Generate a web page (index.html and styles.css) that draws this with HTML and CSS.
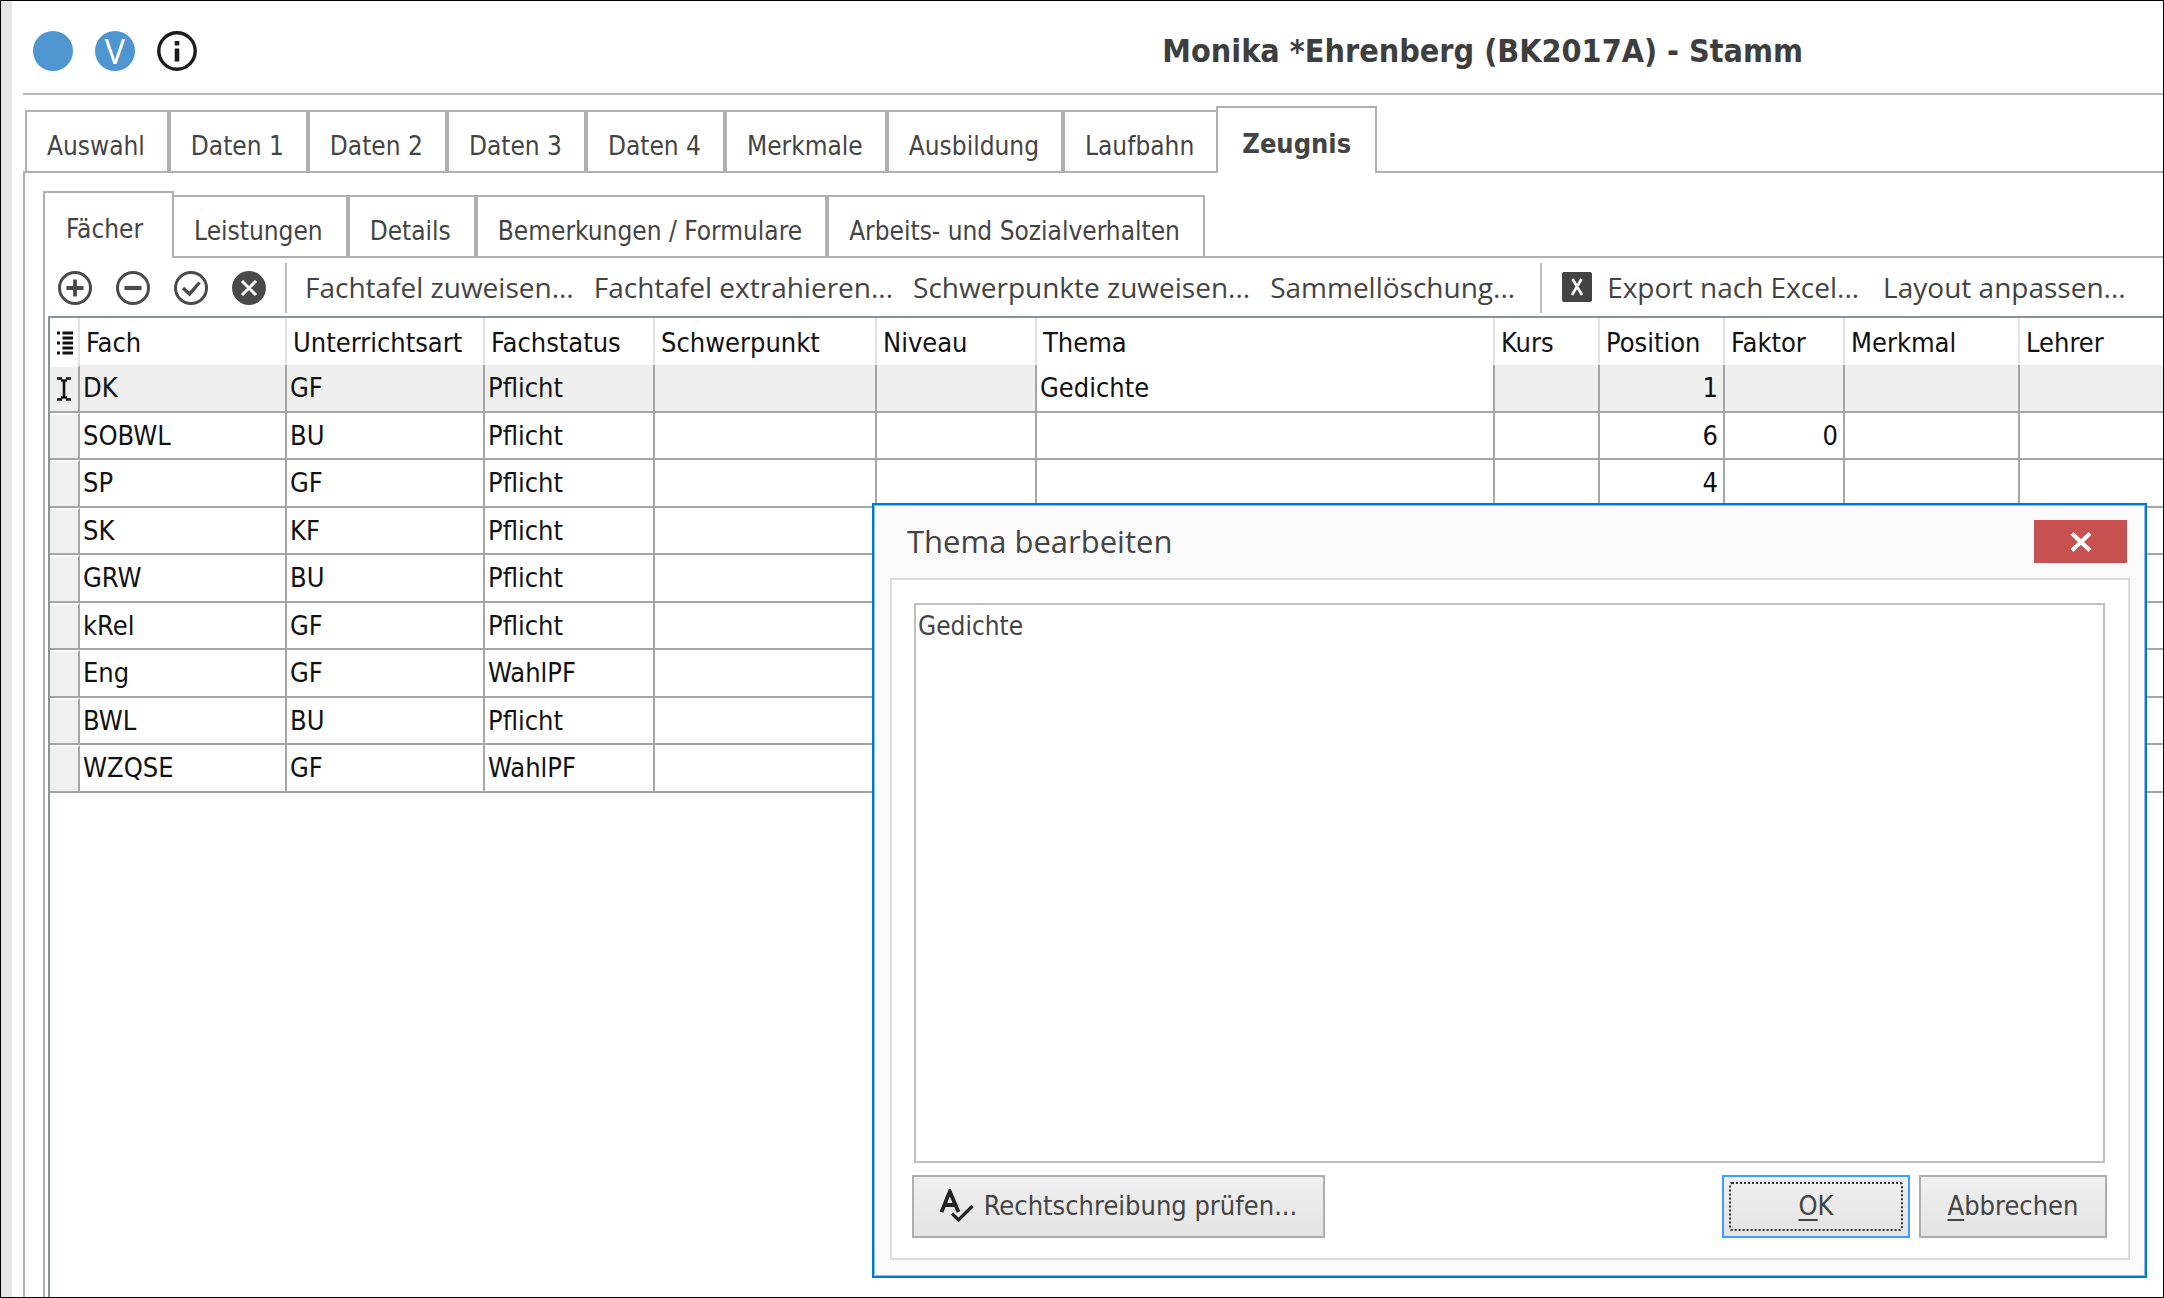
FILE: index.html
```html
<!DOCTYPE html>
<html lang="de">
<head>
<meta charset="utf-8">
<title>Monika *Ehrenberg (BK2017A) - Stamm</title>
<link rel="stylesheet" href="styles.css">
</head>
<body>
<main class="window">
  <header class="header">
    <button class="round-button" type="button" aria-label="Status">
      <svg width="40" height="40" viewBox="0 0 40 40"><circle cx="20" cy="20" r="20" fill="#4f96d0"/></svg>
    </button>
    <button class="round-button round-button--letter" type="button">V</button>
    <button class="round-button" type="button" aria-label="Info">
      <svg width="40" height="40" viewBox="0 0 40 40"><circle cx="20" cy="20" r="18.2" fill="#fff" stroke="#1c1c1c" stroke-width="3.4"/><path d="M20 10v4.500M20 17.500v13" stroke="#1c1c1c" stroke-width="4.6"/></svg>
    </button>
    <h1 class="title">Monika *Ehrenberg (BK2017A) - Stamm</h1>
  </header>

  <nav class="tabs tabs--main" role="tablist">
    <button class="tab" role="tab">Auswahl</button>
    <button class="tab" role="tab">Daten 1</button>
    <button class="tab" role="tab">Daten 2</button>
    <button class="tab" role="tab">Daten 3</button>
    <button class="tab" role="tab">Daten 4</button>
    <button class="tab" role="tab">Merkmale</button>
    <button class="tab" role="tab">Ausbildung</button>
    <button class="tab tab--before-active" role="tab">Laufbahn</button>
    <button class="tab tab--active tab--bold" role="tab" aria-selected="true">Zeugnis</button>
  </nav>

  <section class="panel">
    <nav class="tabs" role="tablist">
      <button class="tab tab--active" role="tab" aria-selected="true">Fächer</button>
      <button class="tab tab--after-active" role="tab">Leistungen</button>
      <button class="tab" role="tab">Details</button>
      <button class="tab" role="tab">Bemerkungen / Formulare</button>
      <button class="tab" role="tab">Arbeits- und Sozialverhalten</button>
    </nav>

    <section class="subpanel">
      <div class="toolbar" role="toolbar">
        <div class="toolbar-icons">
          <button class="icon-button" type="button" aria-label="Hinzufügen">
            <svg width="34" height="34" viewBox="0 0 34 34" fill="none" stroke="#4a4a4a"><circle cx="17" cy="17" r="15.5" stroke-width="3"/><path d="M17 8.5v17M8.500 17h17" stroke-width="3.800"/></svg>
          </button>
          <button class="icon-button" type="button" aria-label="Entfernen">
            <svg width="34" height="34" viewBox="0 0 34 34" fill="none" stroke="#4a4a4a"><circle cx="17" cy="17" r="15.5" stroke-width="3"/><path d="M8.500 17h17" stroke-width="4.200"/></svg>
          </button>
          <button class="icon-button" type="button" aria-label="Speichern">
            <svg width="34" height="34" viewBox="0 0 34 34" fill="none" stroke="#4a4a4a"><circle cx="17" cy="17" r="15.500" stroke-width="3"/><path d="M9 17l6.500 6L25.500 11.500" stroke-width="3.400"/></svg>
          </button>
          <button class="icon-button" type="button" aria-label="Verwerfen">
            <svg width="34" height="34" viewBox="0 0 34 34" fill="none"><circle cx="17" cy="17" r="17" fill="#4a4a4a"/><path d="M10 10l14 14M24 10L10 24" stroke="#fff" stroke-width="3"/></svg>
          </button>
        </div>
        <div class="toolbar-group">
          <button class="text-button" type="button">Fachtafel zuweisen...</button>
          <button class="text-button" type="button">Fachtafel extrahieren...</button>
          <button class="text-button" type="button">Schwerpunkte zuweisen...</button>
          <button class="text-button" type="button">Sammellöschung...</button>
        </div>
        <div class="toolbar-group toolbar-group--view">
          <button class="text-button" type="button">
            <svg width="30" height="30" viewBox="0 0 30 30"><rect width="30" height="30" rx="2" fill="#444"/><path d="M10.500 7l9.500 16M19.500 7L10 23" stroke="#fff" stroke-width="2.6"/></svg>
            Export nach Excel...
          </button>
          <button class="text-button" type="button">Layout anpassen...</button>
        </div>
      </div>

      <div class="grid-box">
        <table class="grid">
          <colgroup>
            <col class="w-mark"><col class="w-fach"><col class="w-art"><col class="w-status"><col class="w-schwer"><col class="w-niveau"><col class="w-thema"><col class="w-kurs"><col class="w-pos"><col class="w-faktor"><col class="w-merkmal"><col>
          </colgroup>
          <thead>
            <tr>
              <th aria-label="Spalten"><svg class="mark" width="16" height="24" viewBox="0 0 16 24" stroke="#111" stroke-width="2.800"><path d="M0 2h3M5.500 2h10.500M5.500 7h10.500M0 12h3M5.500 12h10.500M5.500 17h10.500M0 22h3M5.500 22h10.500"/></svg></th>
              <th>Fach</th><th>Unterrichtsart</th><th>Fachstatus</th><th>Schwerpunkt</th><th>Niveau</th><th>Thema</th><th>Kurs</th><th>Position</th><th>Faktor</th><th>Merkmal</th><th>Lehrer</th>
            </tr>
          </thead>
          <tbody>
            <tr class="current"><td><svg class="mark" width="14" height="24" viewBox="0 0 14 24" fill="none" stroke="#111" stroke-width="2.600"><path d="M0 1.500h5M9 1.500h5M0 22.500h5M9 22.500h5M4 3.500h6M4 20.500h6M7 3.500v17"/></svg></td><td>DK</td><td>GF</td><td>Pflicht</td><td></td><td></td><td class="editing">Gedichte</td><td></td><td class="num">1</td><td></td><td></td><td></td></tr>
            <tr><td></td><td>SOBWL</td><td>BU</td><td>Pflicht</td><td></td><td></td><td></td><td></td><td class="num">6</td><td class="num">0</td><td></td><td></td></tr>
            <tr><td></td><td>SP</td><td>GF</td><td>Pflicht</td><td></td><td></td><td></td><td></td><td class="num">4</td><td></td><td></td><td></td></tr>
            <tr><td></td><td>SK</td><td>KF</td><td>Pflicht</td><td></td><td></td><td></td><td></td><td></td><td></td><td></td><td></td></tr>
            <tr><td></td><td>GRW</td><td>BU</td><td>Pflicht</td><td></td><td></td><td></td><td></td><td></td><td></td><td></td><td></td></tr>
            <tr><td></td><td>kRel</td><td>GF</td><td>Pflicht</td><td></td><td></td><td></td><td></td><td></td><td></td><td></td><td></td></tr>
            <tr><td></td><td>Eng</td><td>GF</td><td>WahlPF</td><td></td><td></td><td></td><td></td><td></td><td></td><td></td><td></td></tr>
            <tr><td></td><td>BWL</td><td>BU</td><td>Pflicht</td><td></td><td></td><td></td><td></td><td></td><td></td><td></td><td></td></tr>
            <tr><td></td><td>WZQSE</td><td>GF</td><td>WahlPF</td><td></td><td></td><td></td><td></td><td></td><td></td><td></td><td></td></tr>
          </tbody>
        </table>
      </div>
    </section>
  </section>
</main>

<div class="dialog" role="dialog" aria-labelledby="dialog-title">
  <div class="dialog-bar">
    <h2 class="dialog-title" id="dialog-title">Thema bearbeiten</h2>
    <button class="close" type="button" aria-label="Schließen">
      <svg width="24" height="20" viewBox="0 0 24 20"><path d="M3 1.500l18 17M21 1.500L3 18.500" stroke="#fff" stroke-width="4"/></svg>
    </button>
  </div>
  <form class="dialog-body">
    <textarea class="text" aria-labelledby="dialog-title" spellcheck="false">Gedichte</textarea>
    <div class="dialog-actions">
      <button class="button button--spell" type="button">
        <svg width="34" height="34" viewBox="0 0 34 34" fill="none" stroke="#222"><path d="M1.500 23L9.800 2.500L18.500 23M4.500 16h11" stroke-width="3.800"/><path d="M12 24.500l6.500 6.500L32.500 17" stroke-width="3.200"/></svg>
        Rechtschreibung prüfen...
      </button>
      <button class="button button--default" type="button"><span class="focus"><span><u>O</u>K</span></span></button>
      <button class="button" type="button"><span><u>A</u>bbrechen</span></button>
    </div>
  </form>
</div>
</body>
</html>
```
FILE: styles.css
```css
:root {
  --ui: "DejaVu Sans Condensed", "DejaVu Sans", sans-serif;
  --bar: "Open Sans", "Noto Sans", sans-serif;
  --line: #b0b0b0;
  --grid-line: #a6a6a6;
  --ink: #444;
}

* { box-sizing: border-box; }

body {
  margin: 0;
  background: #fff;
  color: var(--ink);
  font: 26px/32px var(--ui);
}

button {
  margin: 0;
  padding: 0;
  border: 0;
  background: none;
  color: inherit;
  font: inherit;
  white-space: nowrap;
}

svg { display: block; flex: none; }

.window {
  display: flex;
  flex-direction: column;
  min-height: 100vh;
  padding-left: 22px;
  border: 1px solid #000;
  background: linear-gradient(90deg, #e6e6e6 11px, #fff 11px);
}

/* Header */
.header {
  display: flex;
  align-items: center;
  gap: 22px;
  height: 94px;
  padding: 8px 0 0 10px;
  border-bottom: 2px solid #bbb;
}

.round-button {
  width: 40px;
  height: 40px;
  border-radius: 50%;
}

.round-button--letter {
  background: #4f96d0;
  color: #fff;
  font: 34px/40px var(--bar);
}

.title {
  margin: 0 360px 0 auto;
  color: #3e3e3e;
  font: bold 32px/40px var(--ui);
  white-space: nowrap;
}

/* Tabs */
.tabs {
  display: flex;
  align-items: flex-end;
  height: 67px;
}

.tabs--main {
  margin-top: 11px;
  padding-left: 2px;
}

.tab {
  min-width: 125px;
  padding: 18px 23px 9px 20px;
  border: 2px solid var(--line);
  border-bottom: 0;
}

.tabs .tab:not(.tab--active) { margin-bottom: 2px; }

.tabs--main .tab { padding-right: 22px; }

.tab--before-active { border-right: 0; }
.tab--after-active { border-left: 0; }

.tab--active {
  z-index: 1;
  padding: 20px 24px 13px;
  background: #fff;
}

.tabs--main .tab--active { padding-right: 24px; }

.tab--active:first-child { padding: 20px 29px 13px 21px; }

.tab--bold { font: bold 27px/32px var(--ui); }

.panel {
  display: flex;
  flex: 1;
  flex-direction: column;
  margin-top: -2px;
  padding: 18px 0 0 18px;
  border: solid var(--line);
  border-width: 2px 0 0 2px;
}

.subpanel {
  display: flex;
  flex: 1;
  flex-direction: column;
  margin-top: -2px;
  padding-left: 3px;
  border: solid var(--line);
  border-width: 2px 0 0 2px;
}

/* Toolbar */
.toolbar {
  display: flex;
  align-items: center;
  height: 58px;
  padding-top: 2px;
  font: 28px/38px var(--bar);
}

.toolbar-icons {
  display: flex;
  gap: 24px;
  padding: 0 19px 0 10px;
}

.toolbar-group {
  display: flex;
  align-items: center;
  gap: 20px;
  height: 50px;
  padding: 0 25px 2px 18px;
  border-left: 2px solid #bdbdbd;
}

.toolbar-group--view {
  gap: 24px;
  padding-left: 20px;
}

.text-button {
  display: flex;
  align-items: center;
  gap: 15px;
}

/* Data grid */
.grid-box {
  flex: 1;
  border: solid #8d919b;
  border-width: 2px 0 0 2px;
}

.grid {
  width: 100%;
  table-layout: fixed;
  border-spacing: 0;
  color: #111;
  font: 27px/32px var(--ui);
}

.w-mark { width: 30px; }
.w-fach { width: 207px; }
.w-art { width: 198px; }
.w-status { width: 170px; }
.w-schwer { width: 222px; }
.w-niveau { width: 160px; }
.w-thema { width: 458px; }
.w-kurs { width: 105px; }
.w-pos { width: 125px; }
.w-faktor { width: 120px; }
.w-merkmal { width: 175px; }

.grid th {
  height: 47px;
  padding: 2px 0 0 6px;
  border-right: 2px solid #e3e3e3;
  font-weight: normal;
  text-align: left;
  white-space: nowrap;
}

.grid td {
  height: 48px;
  padding: 1px 5px 1px 3px;
  border: solid var(--grid-line);
  border-width: 0 2px 2px 0;
}

.grid tbody tr:nth-child(even) td { height: 47px; }

.grid th:last-child,
.grid td:last-child { border-right: 0; }

.grid td:first-child {
  border-top: 2px solid #fafafa;
  background: #f0f0f0;
}

.grid .current td { background: #efefef; }
.grid .current .editing { background: #fff; }
.grid .num { text-align: right; }
.grid .mark { margin-left: 1px; }
.grid td .mark { margin-left: 4px; }

/* Dialog window */
.dialog {
  position: absolute;
  top: 503px;
  right: 17px;
  bottom: 20px;
  left: 872px;
  display: flex;
  flex-direction: column;
  padding: 15px 15px 16px 16px;
  border: 2px solid #0078cc;
  background: #fafafa;
  box-shadow: inset 0 0 0 1px #8cc0e8;
}

.dialog-bar {
  display: flex;
  justify-content: space-between;
  height: 58px;
  padding: 0 3px 0 17px;
}

.dialog-title {
  margin: 0;
  font: 31px/42px var(--bar);
}

.close {
  display: grid;
  place-items: center;
  width: 93px;
  height: 43px;
  background: #c75050;
}

.dialog-body {
  display: flex;
  flex: 1;
  flex-direction: column;
  gap: 12px;
  padding: 23px 21px 20px 20px;
  border: 2px solid #dcdcdc;
  background: #fff;
}

.text {
  flex: 1;
  margin: 0 2px;
  padding: 5px 2px;
  border: 2px solid #c0c0c0;
  border-radius: 0;
  outline: 0;
  background: #fff;
  color: var(--ink);
  font: 26px/32px var(--ui);
  resize: none;
}

.dialog-actions {
  display: flex;
  gap: 9px;
  font: 27px/32px var(--ui);
}

.button {
  display: flex;
  align-items: center;
  justify-content: center;
  gap: 10px;
  width: 188px;
  height: 63px;
  padding-bottom: 2px;
  border: 2px solid #aeaeae;
  background: linear-gradient(#f0f0f0, #e3e3e3);
}

.button u { text-underline-offset: 4px; text-decoration-thickness: 2px; }

.button--spell {
  width: 413px;
  margin-right: auto;
}

.button--default {
  padding: 5px;
  border-color: #3e9dff;
}

.focus {
  display: grid;
  flex: 1;
  place-items: center;
  align-self: stretch;
  padding-bottom: 2px;
  border: 2px dotted #333;
  border-radius: 3px;
}
```
